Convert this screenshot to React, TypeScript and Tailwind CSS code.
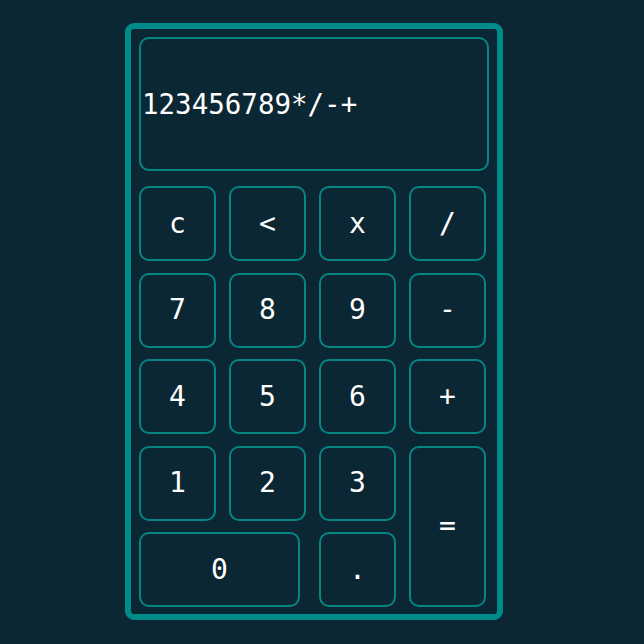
import React from 'react';

const keys: { label: string; cls: string }[] = [
  { label: 'c', cls: '' },
  { label: '<', cls: '' },
  { label: 'x', cls: '' },
  { label: '/', cls: '' },
  { label: '7', cls: '' },
  { label: '8', cls: '' },
  { label: '9', cls: '' },
  { label: '-', cls: '' },
  { label: '4', cls: '' },
  { label: '5', cls: '' },
  { label: '6', cls: '' },
  { label: '+', cls: '' },
  { label: '1', cls: '' },
  { label: '2', cls: '' },
  { label: '3', cls: '' },
  { label: '=', cls: 'row-span-2' },
  { label: '0', cls: 'col-span-2 w-[161px]' },
  { label: '.', cls: '' },
];

export default function App() {
  return (
    <div className="min-h-[644px] w-full bg-[#0c2734] pl-[125px] pt-[23px] font-['DejaVu_Sans_Mono',monospace]">
      <div className="w-[378px] rounded-[9px] border-[6px] border-[#008b8b] px-[8px] pt-[8px] pb-[7px]">
        {/* display */}
        <div className="flex h-[134px] w-[350px] items-center rounded-[10px] border-2 border-[#068585] pl-[1px] pt-[2px] text-[27.5px] text-white">
          123456789*/-+
        </div>
        <div className="mt-[15px] grid grid-cols-[repeat(4,77px)] grid-rows-[repeat(5,75px)] gap-x-[13px] gap-y-[11.5px]">
          {keys.map((k) => (
            <button
              key={k.label}
              className={`flex items-center justify-center rounded-[10px] border-2 border-[#068585] bg-transparent text-[28px] text-white ${k.cls}`}
            >
              {k.label}
            </button>
          ))}
        </div>
      </div>
    </div>
  );
}
